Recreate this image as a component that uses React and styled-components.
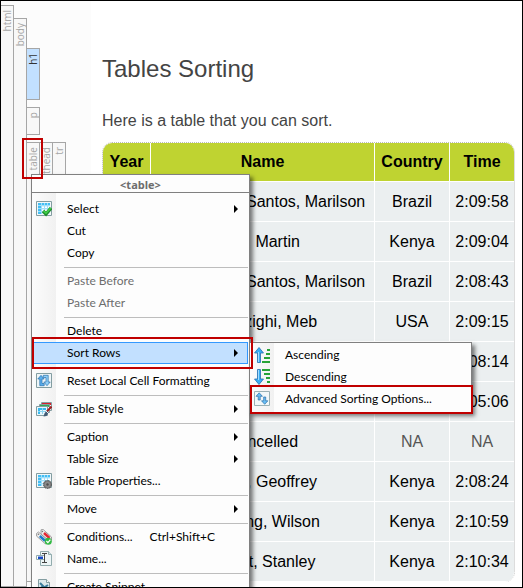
import React from "react";
import styled, { createGlobalStyle, css } from "styled-components";

const GlobalStyle = createGlobalStyle`
  *, *::before, *::after { box-sizing: border-box; }
  body { margin: 0; background: #fff; }
`;

const uiFont = css`font-family: Lato, "Open Sans", "Noto Sans", sans-serif;`;

const Frame = styled.main`
  position: relative;
  display: flex;
  height: 100vh;
  overflow: hidden;
  border: 1px solid #000;
  background: #fff;
  font-family: "Liberation Sans", Arial, sans-serif;
`;

/* ---------- tag bars ---------- */

const TagGutter = styled.aside`
  flex: 0 0 90px;
  display: flex;
  align-items: stretch;
  padding-top: 4px;
  background: #fcfcfc;
`;

const TagBlock = styled.div`
  display: flex;
  flex: ${(p) => (p.$grow ? "1 0 auto" : "0 0 auto")};
  height: ${(p) => (p.$height ? `${p.$height}px` : "auto")};
  margin-left: -1px;
`;

const TagStrip = styled.div`
  flex: 0 0 14px;
  display: flex;
  justify-content: center;
  padding-top: 4px;
  overflow: hidden;
  border: 1px solid #a6a6a6;
  background: ${(p) => (p.$active ? "#c2e0ff" : "#f8f8f8")};
  color: ${(p) => (p.$active ? "#333" : "#a6a6a6")};
`;

const TagLabel = styled.span`
  font-family: "Open Sans", "Noto Sans", sans-serif;
  height: max-content;
  writing-mode: vertical-rl;
  transform: rotate(180deg);
  font-size: 10px;
  line-height: 12px;
`;

const TagChildren = styled.div`
  display: flex;
  flex-direction: ${(p) => (p.$row ? "row" : "column")};
  gap: ${(p) => (p.$row ? 0 : 7)}px;
  padding-top: ${(p) => p.$offset || 0}px;
`;

function Tag({ name, active, height, grow, offset, row, children }) {
  return (
    <TagBlock $height={height} $grow={grow}>
      <TagStrip $active={active}>
        <TagLabel>{name}</TagLabel>
      </TagStrip>
      {children && (
        <TagChildren $offset={offset} $row={row}>
          {children}
        </TagChildren>
      )}
    </TagBlock>
  );
}

/* ---------- document ---------- */

const Document = styled.article`
  flex: 1;
  min-width: 0;
  padding: 52px 7px 0 11px;
  color: #444;
`;

const Title = styled.h1`
  margin: 0 0 26px;
  font-size: 24px;
  font-weight: 400;
  line-height: 32px;
`;

const Intro = styled.p`
  margin: 0 0 11px;
  font-size: 16px;
  line-height: 20px;
`;

const TableBox = styled.div`
  overflow: hidden;
  border: 1px dotted #bbb;
  border-bottom: 0;
  border-radius: 10px;
`;

const ResultTable = styled.table`
  width: 100%;
  table-layout: fixed;
  border-spacing: 0;
  color: #000;
  font-size: 16px;
  text-align: center;
`;

const Col = styled.col`
  width: ${(p) => (p.$width ? `${p.$width}px` : "auto")};
`;

const cell = css`
  height: 40px;
  padding: 0;
  border-right: 1px solid #fff;
  border-bottom: 1px solid #fff;
  white-space: nowrap;
  &:last-child { border-right: 0; }
`;

const HeadCell = styled.th`
  ${cell}
  height: 39px;
  background: #bfd331;
`;

const Cell = styled.td`
  ${cell}
  background: #ebeff0;
  color: ${(p) => (p.$muted ? "#555" : "#000")};
`;

const results = [
  ["2006", "Gomes dos Santos, Marilson", "Brazil", "2:09:58"],
  ["2007", "Lel, Martin", "Kenya", "2:09:04"],
  ["2008", "Gomes dos Santos, Marilson", "Brazil", "2:08:43"],
  ["2009", "Keflezighi, Meb", "USA", "2:09:15"],
  ["2010", "Gebremariam, Gebre", "Ethiopia", "2:08:14"],
  ["2011", "Mutai, Geoffrey", "Kenya", "2:05:06"],
  ["2012", "Cancelled", "NA", "NA"],
  ["2013", "Mutai, Geoffrey", "Kenya", "2:08:24"],
  ["2014", "Kipsang, Wilson", "Kenya", "2:10:59"],
  ["2015", "Biwott, Stanley", "Kenya", "2:10:34"],
];

/* ---------- menus ---------- */

const MenuPanel = styled.div`
  ${uiFont}
  position: absolute;
  border: 1px solid #808080;
  background: linear-gradient(90deg, #fcfcfc 0, #f1f1f1 24px, #fdfdfd 24px);
  box-shadow: 3px 3px 4px rgba(0, 0, 0, 0.5);
  font-size: 12px;
`;

const ContextMenu = styled(MenuPanel)`
  top: 173px;
  left: 30px;
  width: 219px;
`;

const SubMenu = styled(MenuPanel)`
  top: 0;
  left: calc(100% + 1px);
  width: 223px;
  padding: 1px 1px 2px;
`;

const MenuHeader = styled.div`
  height: 18px;
  border-bottom: 1px solid #808080;
  background: #fdfdfd;
  color: #6d6d6d;
  font-family: "Open Sans", sans-serif;
  font-size: 11px;
  font-weight: 700;
  line-height: 20px;
  text-align: center;
`;

const MenuList = styled.div`
  padding: 5px 1px;
`;

const ItemBox = styled.div`
  position: relative;
`;

const Item = styled.button`
  display: grid;
  grid-template-columns: 31px auto 1fr;
  align-items: center;
  width: 100%;
  height: 22px;
  padding: 0 9px 0 2px;
  border: 1px solid ${(p) => (p.$active ? "#3399ff" : "transparent")};
  background: ${(p) => (p.$active ? "#c2e0ff" : "transparent")};
  color: #000;
  font: inherit;
  line-height: 20px;
  text-align: left;
  white-space: nowrap;
  &:disabled { color: #6d6d6d; }
`;

const IconSlot = styled.span`
  display: flex;
  width: 16px;
  height: 16px;
`;

const Shortcut = styled.span`
  padding-left: 17px;
`;

const Arrow = styled.span`
  justify-self: end;
  border: 4px solid transparent;
  border-left-color: #000;
  border-right-width: 0;
`;

const Separator = styled.hr`
  height: 1px;
  margin: 3px 0 2px 31px;
  border: 0;
  background: #bdbdbd;
`;

const Callout = styled.span`
  position: absolute;
  z-index: 2;
  inset: ${(p) => p.$inset};
  border: 2px solid #c00000;
  pointer-events: none;
`;

const TagCallout = styled(Callout)`
  inset: auto;
  top: 137px;
  left: 21px;
  width: 21px;
  height: 41px;
`;

/* ---------- icons ---------- */

const Svg = ({ children }) => (
  <svg width="16" height="16" viewBox="0 0 16 16" aria-hidden="true">
    {children}
  </svg>
);

const Grid = () => (
  <>
    <path d="M.5.5h15v14H.5z" fill="#f2f8fa" stroke="#839da1" />
    <path d="M2 2h12v11H2z" fill="#d9f2fd" />
    <path d="M2 2h12v3H2zM2 5h3v8H2z" fill="#42bdf4" />
    <path d="M2 4.5h12M2 7.5h12M2 10.5h12M5.5 2v11M8.5 2v11M11.5 2v11" stroke="#a0dff9" fill="none" />
    <path d="M6 6h2v1H6zM9 6h2v1H9zM12 6h2v1h-2zM6 9h2v1H6zM9 9h2v1H9z" fill="#fff" />
  </>
);

const SelectIcon = () => (
  <Svg>
    <Grid />
    <path d="M7 10l3 3 5-6" fill="none" stroke="#1f8d2c" strokeWidth="3.4" />
    <path d="M7.5 10.2l2.5 2 4.7-5.2" fill="none" stroke="#40cf48" strokeWidth="1.7" />
  </Svg>
);

const PropertiesIcon = () => (
  <Svg>
    <Grid />
    <circle cx="11.5" cy="11.5" r="4" fill="#777" stroke="#555" strokeDasharray="1.6 1" />
    <circle cx="11.5" cy="11.5" r="2.8" fill="#8b8b8b" />
    <circle cx="11.5" cy="11.5" r="1.2" fill="#505050" />
  </Svg>
);

const ResetIcon = () => (
  <Svg>
    <path d="M.5.5h15v14H.5z" fill="#eef5f7" stroke="#839da1" />
    <path d="M8.2 12.7H3.8V6H1.8L5 2.3 8.2 6H6v4.5h2.2z" fill="#5aaeee" stroke="#286fa9" strokeWidth=".7" />
    <path d="M7.3 2.3h4.9V9h2L11 12.7 7.8 9H10V4.5H7.3z" fill="#8fd0fa" stroke="#286fa9" strokeWidth=".7" />
  </Svg>
);

const StyleIcon = () => (
  <Svg>
    <path d="M5.5 1.5h10v8h-10z" fill="#fff" stroke="#839da1" />
    <path d="M6 2h9v2H6z" fill="#d8212c" />
    <path d="M3.5 3.5h10v8h-10z" fill="#fff" stroke="#839da1" />
    <path d="M4 4h9v2H4z" fill="#35a953" />
    <path d="M.5 5.5h11v9H.5z" fill="#e8f7fd" stroke="#839da1" />
    <path d="M2 7h8v2H2zM2 9h2v4H2z" fill="#36b8ef" />
    <path d="M2 10.5h8M6.5 7v6" stroke="#8bd5f2" />
    <path d="M15.5 5.5l-4.5 5" stroke="#9e2224" strokeWidth="2" />
    <path d="M10.5 9.5l2 2-2 3.5-3 .5 1-3z" fill="#415b75" />
    <path d="M10 10l2 2" stroke="#eee" />
  </Svg>
);

const ConditionsIcon = () => (
  <Svg>
    <path d="M5 .8l2.2-.3L15.5 8v3l-2 1.5L5 5z" fill="#eee" stroke="#8a8a8a" strokeWidth=".8" />
    <path d="M8 4l5.5 5" stroke="#e32531" strokeWidth="2.5" />
    <path d="M.5 4.5L2.5 3 11 10.5v3L9.5 15 .7 7.2z" fill="#eee" stroke="#8a8a8a" strokeWidth=".8" />
    <path d="M3.8 7l5.2 4.7" stroke="#187dcc" strokeWidth="2.5" />
    <circle cx="2.5" cy="5.3" r=".8" fill="#777" />
    <circle cx="6.4" cy="2.5" r=".8" fill="#777" />
    <circle cx="12.3" cy="12.2" r="3.5" fill="#34b945" />
    <path d="M10.4 12l1.5 1.7 2.5-3" fill="none" stroke="#fff" strokeWidth="1.2" />
  </Svg>
);

const NameIcon = () => (
  <Svg>
    <path d="M4.5.5h8l3 3v11h-11z" fill="#edf5f6" stroke="#92acae" />
    <path d="M12.5.5v3h3" fill="#d7e7e9" stroke="#92acae" />
    <path d="M.5 4.5h8v4h-8z" fill="#fff" stroke="#92acae" />
    <path d="M2 5.5h5v2.5H2z" fill="#174bc4" />
    <path d="M6 2.5h5M8.5 2.5v9M6 11.5h5" stroke="#444" fill="none" />
  </Svg>
);

const SnippetIcon = () => (
  <Svg>
    <path d="M2.5.5h8l3 3v11h-11z" fill="#dce9ec" stroke="#839da1" />
    <path d="M10.5.5v3h3" fill="#fff" stroke="#839da1" />
    <path d="M4 4l3 3-3 3M12 6L9 8l3 3" fill="none" stroke="#3a7b9b" strokeWidth="2" />
  </Svg>
);

const SortIcon = ({ down }) => (
  <Svg>
    <path
      d={down ? "M3.5.5h3V10h3L5 15.5.5 10h3z" : "M3.5 15.5V6h-3L5 .5 9.5 6h-3v9.5z"}
      fill="#38aef5"
      stroke="#266fae"
      strokeWidth=".8"
    />
    <path d={down ? "M4.5 1v10" : "M4.5 5v10"} stroke="#a0dcff" />
    <path
      d={down
        ? "M8 0h8v2H8zM10 4h6v2h-6zM12 8h4v2h-4zM13 12h3v2h-3z"
        : "M13 2h3v2h-3zM12 6h4v2h-4zM10 10h6v2h-6zM8 14h8v2H8z"}
      fill="#27a337"
    />
  </Svg>
);

const AdvancedIcon = () => (
  <Svg>
    <path d="M.5.5h15v14H.5z" fill="#f2f8f9" stroke="#9bb1b4" />
    <path d="M4.2 9V5.3H2L5.2 1.8l3.2 3.5H6.2V9z" fill="#68bdf4" stroke="#286fa9" strokeWidth=".7" />
    <path d="M9.7 6h2v3.8h2.2l-3.2 3.5-3.2-3.5h2.2z" fill="#68bdf4" stroke="#286fa9" strokeWidth=".7" />
  </Svg>
);

function MenuItem({ icon, label, shortcut, arrow, active, disabled, callout, children }) {
  return (
    <ItemBox>
      <Item type="button" role="menuitem" disabled={disabled} $active={active}>
        <IconSlot>{icon}</IconSlot>
        <span>{label}</span>
        {shortcut && <Shortcut>{shortcut}</Shortcut>}
        {arrow && <Arrow />}
      </Item>
      {children}
      {callout && <Callout $inset={callout} />}
    </ItemBox>
  );
}

export default function App() {
  return (
    <Frame>
      <GlobalStyle />
      <TagGutter>
        <Tag name="html" grow offset={13}>
          <Tag name="body" grow offset={30}>
            <Tag name="h1" active height={52} />
            <Tag name="p" height={28} />
            <Tag name="table" height={440} row>
              <Tag name="thead" height={42} />
              <Tag name="tr" height={42} />
            </Tag>
          </Tag>
        </Tag>
      </TagGutter>

      <Document>
        <Title>Tables Sorting</Title>
        <Intro>Here is a table that you can sort.</Intro>
        <TableBox>
          <ResultTable>
            <colgroup>
              <Col $width={48} />
              <Col />
              <Col $width={75} />
              <Col $width={64} />
            </colgroup>
            <thead>
              <tr>
                {["Year", "Name", "Country", "Time"].map((h) => (
                  <HeadCell key={h} scope="col">{h}</HeadCell>
                ))}
              </tr>
            </thead>
            <tbody>
              {results.map((row) => (
                <tr key={row[0]}>
                  {row.map((value, i) => (
                    <Cell key={i} $muted={value === "NA"}>{value}</Cell>
                  ))}
                </tr>
              ))}
            </tbody>
          </ResultTable>
        </TableBox>
      </Document>

      <ContextMenu role="menu" aria-label="table">
        <MenuHeader>&lt;table&gt;</MenuHeader>
        <MenuList>
          <MenuItem icon={<SelectIcon />} label="Select" arrow />
          <MenuItem label="Cut" />
          <MenuItem label="Copy" />
          <Separator />
          <MenuItem label="Paste Before" disabled />
          <MenuItem label="Paste After" disabled />
          <Separator />
          <MenuItem label="Delete" />
          <MenuItem label="Sort Rows" arrow active callout="-5px -5px -5px -1px">
            <SubMenu role="menu" aria-label="Sort Rows">
              <MenuItem icon={<SortIcon />} label="Ascending" />
              <MenuItem icon={<SortIcon down />} label="Descending" />
              <MenuItem icon={<AdvancedIcon />} label="Advanced Sorting Options..." callout="-3px -3px -4px -1px" />
            </SubMenu>
          </MenuItem>
          <Separator />
          <MenuItem icon={<ResetIcon />} label="Reset Local Cell Formatting" />
          <Separator />
          <MenuItem icon={<StyleIcon />} label="Table Style" arrow />
          <Separator />
          <MenuItem label="Caption" arrow />
          <MenuItem label="Table Size" arrow />
          <MenuItem icon={<PropertiesIcon />} label="Table Properties..." />
          <Separator />
          <MenuItem label="Move" arrow />
          <Separator />
          <MenuItem icon={<ConditionsIcon />} label="Conditions..." shortcut="Ctrl+Shift+C" />
          <MenuItem icon={<NameIcon />} label="Name..." />
          <Separator />
          <MenuItem icon={<SnippetIcon />} label="Create Snippet..." />
        </MenuList>
      </ContextMenu>
      <TagCallout />
    </Frame>
  );
}
